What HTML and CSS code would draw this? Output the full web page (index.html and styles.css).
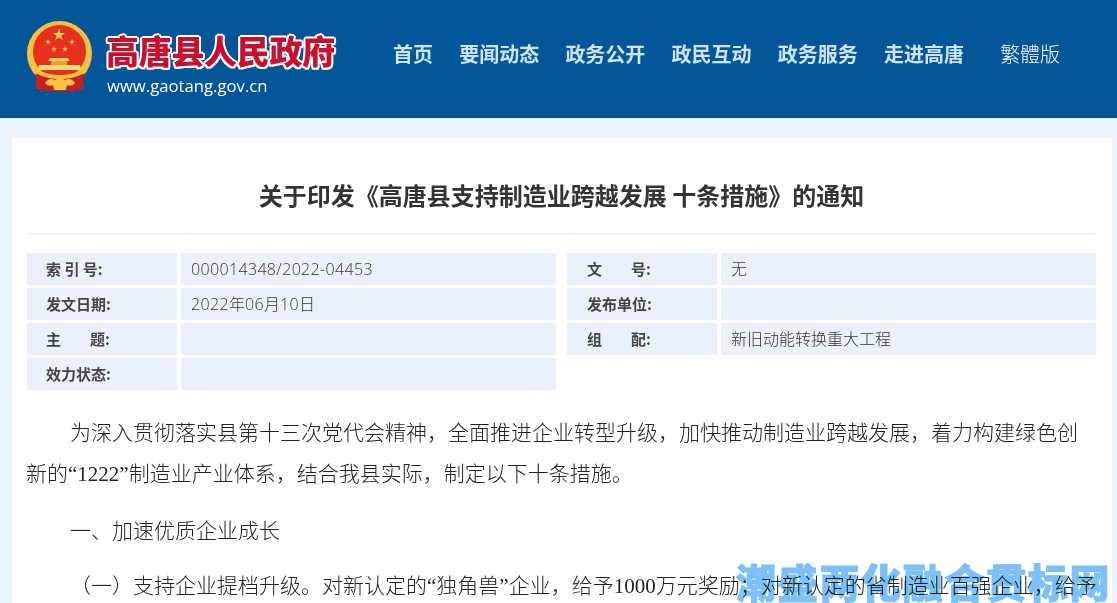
FILE: index.html
```html
<!DOCTYPE html>
<html lang="zh-CN">
<head>
    <meta charset="UTF-8">
    <meta name="viewport" content="width=device-width, initial-scale=1.0">
    <title>关于印发《高唐县支持制造业跨越发展 十条措施》的通知</title>
    <link rel="stylesheet" href="styles.css">
</head>
<body>
    <header class="top-header">
        <a href="#" class="logo">
            <svg class="emblem" viewBox="0 0 66 71" width="66" height="71" aria-hidden="true">
                <defs>
                    <polygon id="star" points="0,-1 .224,-.309 .951,-.309 .363,.118 .588,.809 0,.382 -.588,.809 -.363,.118 -.951,-.309 -.224,-.309" fill="#f8cf4a"/>
                </defs>
                <circle cx="32.5" cy="32.5" r="32.5" fill="#f6c342"/>
                <circle cx="32.5" cy="30.5" r="26.5" fill="#e5301f"/>
                <use href="#star" transform="translate(32 14) scale(6.5)"/>
                <use href="#star" transform="translate(21 21) scale(3)"/>
                <use href="#star" transform="translate(45 21) scale(3)"/>
                <use href="#star" transform="translate(27 28) scale(3)"/>
                <use href="#star" transform="translate(38 28) scale(3)"/>
                <path d="M23 37 H41 L43 40 H21 Z" fill="#f8d15a"/>
                <rect x="24" y="40" width="16" height="4" fill="#e9a12e"/>
                <path d="M12 44 H53 L54 49 H11 Z" fill="#f8d97c"/>
                <path d="M9 51 Q20 56 33 56 Q46 56 57 51 L56 68 Q46 71 33 70 Q20 71 9 68 Z" fill="#c8201f"/>
                <path d="M8 48 Q20 54 33 54 Q46 54 58 48 L58 52 Q46 58 33 58 Q20 58 8 52 Z" fill="#f6c342"/>
                <path d="M18 62 Q22 56 28 59 Q33 55 38 59 Q44 56 48 62 Q45 66 40 64 L39 69 H27 L26 64 Q21 66 18 62 Z" fill="#f6c342"/>
            </svg>
            <div class="logo-text">
                <div class="logo-title">高唐县人民政府</div>
                <div class="logo-url">www.gaotang.gov.cn</div>
            </div>
        </a>
        <nav class="main-nav">
            <a href="#">首页</a>
            <a href="#">要闻动态</a>
            <a href="#">政务公开</a>
            <a href="#">政民互动</a>
            <a href="#">政务服务</a>
            <a href="#">走进高唐</a>
            <a href="#" class="nav-lang">繁體版</a>
        </nav>
    </header>

    <main class="article-box">
        <h1 class="article-title">关于印发《高唐县支持制造业跨越发展 十条措施》的通知</h1>

        <div class="meta-table">
            <div class="meta-label">索 引 号:</div>
            <div class="meta-value"><span class="digits">000014348/2022-04453</span></div>
            <div class="meta-label">文<span class="gap"></span>号:</div>
            <div class="meta-value">无</div>

            <div class="meta-label">发文日期:</div>
            <div class="meta-value"><span class="digits">2022</span>年<span class="digits">06</span>月<span class="digits">10</span>日</div>
            <div class="meta-label">发布单位:</div>
            <div class="meta-value"></div>

            <div class="meta-label">主<span class="gap"></span>题:</div>
            <div class="meta-value"></div>
            <div class="meta-label">组<span class="gap"></span>配:</div>
            <div class="meta-value">新旧动能转换重大工程</div>

            <div class="meta-label">效力状态:</div>
            <div class="meta-value"></div>
        </div>

        <div class="article-body">
            <p>为深入贯彻落实县第十三次党代会精神，全面推进企业转型升级，加快推动制造业跨越发展，着力构建绿色创新的<span class="num">“1222”</span>制造业产业体系，结合我县实际，制定以下十条措施。</p>
            <p>一、加速优质企业成长</p>
            <p class="item">（一）支持企业提档升级。对新认定的<span class="num">“</span>独角兽<span class="num">”</span>企业，给予<span class="num">1000</span>万元奖励；对新认定的省制造业百强企业，给予</p>
        </div>
    </main>

    <div class="watermark">潮盛两化融合贯标网</div>
</body>
</html>
```

FILE: styles.css
```css
html, body {
    margin: 0;
    padding: 0;
    height: 603px;
    overflow: hidden;
    background: #ecf5fe;
    font-family: "Noto Sans CJK SC", "Noto Sans", sans-serif;
    color: #333;
}

a {
    text-decoration: none;
}

.top-header {
    display: flex;
    align-items: flex-start;
    height: 118px;
    background: #025596;
}

.logo {
    display: flex;
    width: 366px;
    padding: 21px 0 0 27px;
    box-sizing: border-box;
}

.emblem {
    flex: none;
}

.logo-text {
    margin-left: 13px;
}

.logo-title {
    margin-top: 9px;
    font-size: 33px;
    line-height: 40px;
    font-weight: 900;
    letter-spacing: -0.3px;
    white-space: nowrap;
    color: #c8102e;
    text-shadow: 2px 0 0 #fff, -2px 0 0 #fff, 0 2px 0 #fff, 0 -2px 0 #fff, 1.5px 1.5px 0 #fff, -1.5px 1.5px 0 #fff, 1.5px -1.5px 0 #fff, -1.5px -1.5px 0 #fff;
}

.logo-url {
    margin-top: 6px;
    margin-left: 1px;
    font-family: "Open Sans", sans-serif;
    font-size: 16.7px;
    line-height: 20px;
    color: #fff;
    white-space: nowrap;
}

.main-nav {
    display: flex;
    padding-top: 40px;
    margin-left: 27px;
}

.main-nav a {
    margin-right: 26.2px;
    font-size: 20px;
    line-height: 28px;
    font-weight: 700;
    color: #cde5f6;
    white-space: nowrap;
}

.main-nav .nav-lang {
    margin-left: 10px;
    margin-right: 0;
    font-weight: 300;
    color: #fff;
}

.article-box {
    height: 465px;
    margin: 20px 5px 0 12px;
    padding: 0 15px 0 14px;
    overflow: hidden;
    background: #fff;
}

.article-title {
    margin: 0 0 19px;
    padding: 37px 0 18px;
    border-bottom: 1px solid #eee;
    font-size: 24px;
    line-height: 40px;
    font-weight: 700;
    color: #333;
    text-align: center;
}

.meta-table {
    display: grid;
    grid-template-columns: 150px 375px 157px 375px;
    grid-auto-rows: 32px;
    gap: 3px 4px;
    margin-left: 1px;
}

.meta-label,
.meta-value {
    background: #eaf1fb;
    line-height: 32px;
    white-space: nowrap;
}

.meta-label {
    padding-left: 19px;
    font-size: 15px;
    font-weight: 700;
    color: #444;
}

.meta-value {
    padding-left: 10px;
    font-family: "Open Sans", "Noto Sans CJK SC", sans-serif;
    font-size: 16px;
    font-weight: 300;
    color: #333;
}

.meta-table .meta-label:nth-child(4n+3) {
    margin-left: 7px;
    padding-left: 20px;
}

.digits {
    letter-spacing: 0.35px;
}

.gap {
    display: inline-block;
    width: 29px;
}

.article-body {
    margin-top: 21px;
    font-size: 21px;
    line-height: 41px;
    font-weight: 300;
    color: #222;
}

.article-body p {
    margin: 0 0 14px;
    text-indent: 44px;
}

.article-body .item {
    white-space: nowrap;
}

.num {
    font-family: "Liberation Serif", serif;
}

/* sits over the last line of the page, the text still shows through */
.watermark {
    position: absolute;
    left: 736px;
    top: 553px;
    font-size: 40px;
    line-height: 56px;
    font-weight: 900;
    letter-spacing: 1.7px;
    color: #7cc1f8;
    -webkit-text-stroke: 1px #7cc1f8;
    mix-blend-mode: multiply;
    white-space: nowrap;
}
```
